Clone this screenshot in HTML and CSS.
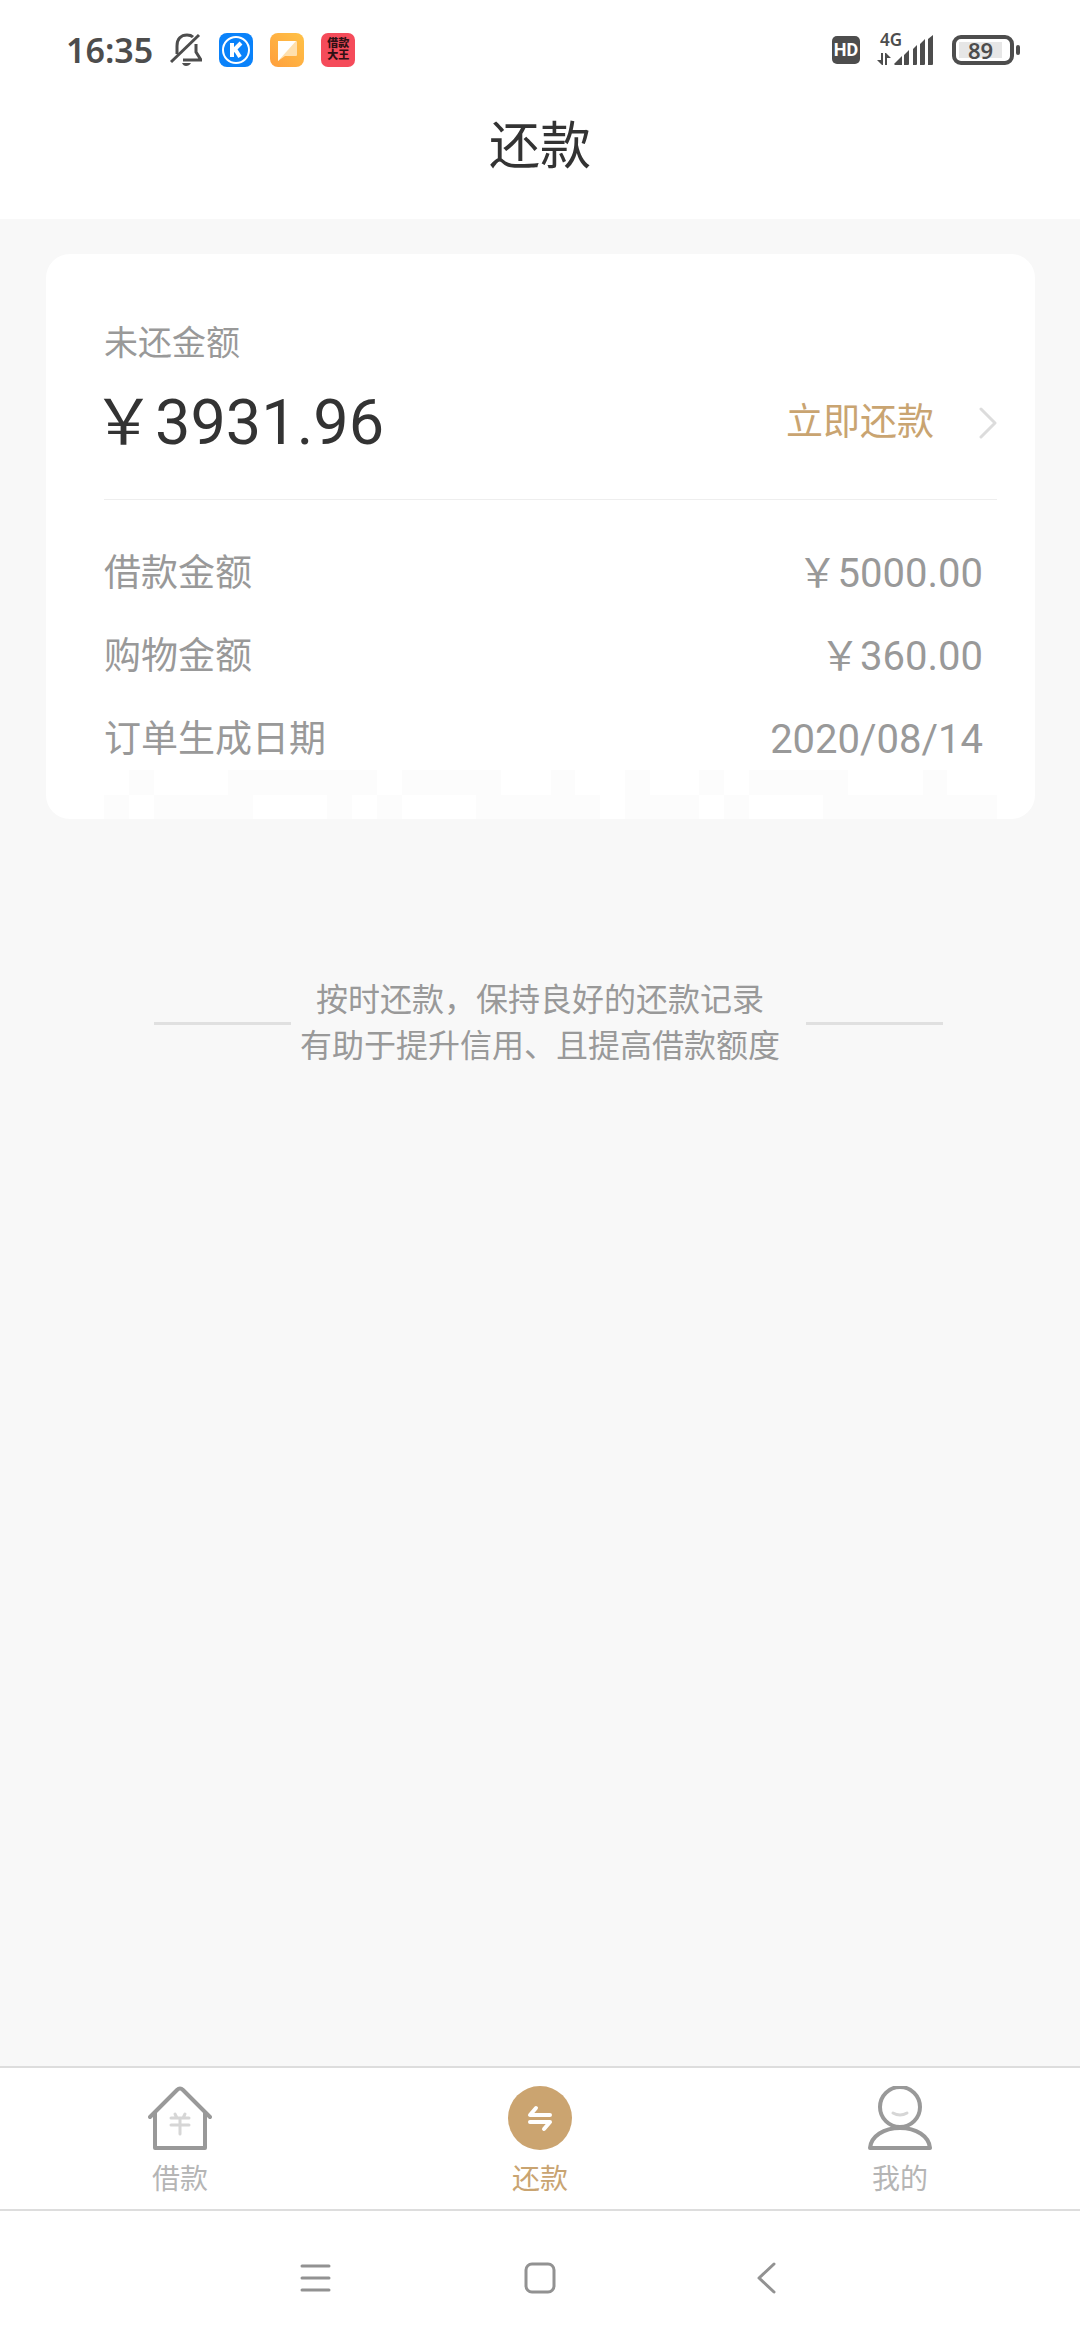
FILE: index.html
```html
<!DOCTYPE html>
<html lang="zh-CN">
<head>
    <meta charset="UTF-8">
    <meta name="viewport" content="width=device-width, initial-scale=1.0">
    <title>还款</title>
    <link rel="stylesheet" href="styles.css">
</head>
<body>
    <div class="status-bar">
        <div class="status-left">
            <span class="clock">16:35</span>
            <svg class="bell" viewBox="0 0 32 34" fill="none" stroke="#4d4d4d" stroke-width="3">
                <path d="M7 21V13C7 6 11 2 17 2C20 2 22 3 23 4M26 11V19L31 27H13"/>
                <path d="M1 29L29 2"/>
                <path d="M12 30H21C20 32 18 33 16 33S13 32 12 30Z" fill="#4d4d4d" stroke="none"/>
            </svg>
            <svg class="app-icon" viewBox="0 0 34 34">
                <rect width="34" height="34" rx="8" fill="#0a82fa"/>
                <circle cx="17" cy="17" r="13" fill="none" stroke="#fff" stroke-width="2"/>
                <path d="M13 10V24M22 10L14 18M16 16L21 24" fill="none" stroke="#fff" stroke-width="4"/>
            </svg>
            <svg class="app-icon" viewBox="0 0 34 34">
                <defs>
                    <linearGradient id="orange" x1="1" y1="0" x2="0" y2="1">
                        <stop offset="0" stop-color="#ffc247"/>
                        <stop offset="1" stop-color="#ff9f3d"/>
                    </linearGradient>
                </defs>
                <rect width="34" height="34" rx="8" fill="url(#orange)"/>
                <path d="M8 8H26Q27 8 27 9V22Q27 23 26 23H15L8 28Z" fill="#ffe0ae"/>
                <path d="M8 8H26L8 28Z" fill="#fff"/>
            </svg>
            <span class="app-badge">借款<br>大王</span>
        </div>
        <div class="status-right">
            <span class="hd">HD</span>
            <div class="signal">
                <span class="network">4G</span>
                <svg viewBox="0 0 58 32" fill="#4d4d4d">
                    <path d="M0 26L5 31H6V19H4V26ZM8 31H10V24H14L9 19H8Z"/>
                    <path d="M17 30L25 22V31H18ZM27 21L32 16V30Q32 31 31 31H27ZM36 15L40 11V30Q40 31 39 31H36ZM43 10L48 5V30Q48 31 47 31H43ZM51 5L56 1V30Q56 31 55 31H51Z"/>
                </svg>
            </div>
            <span class="battery"><span class="battery-level">89</span></span>
        </div>
    </div>

    <header class="header">
        <h1>还款</h1>
    </header>

    <main class="content">
        <section class="card">
            <h2 class="card-label">未还金额</h2>
            <div class="amount-row">
                <span class="amount">￥3931.96</span>
                <a href="#repay" class="repay-link">
                    立即还款
                    <svg viewBox="0 0 18 32" fill="none" stroke="#dcdcdc" stroke-width="3" stroke-linecap="round" stroke-linejoin="round">
                        <path d="M2 2L16 16L2 30"/>
                    </svg>
                </a>
            </div>
            <dl class="details">
                <div class="detail-row">
                    <dt>借款金额</dt>
                    <dd>￥5000.00</dd>
                </div>
                <div class="detail-row">
                    <dt>购物金额</dt>
                    <dd>￥360.00</dd>
                </div>
                <div class="detail-row">
                    <dt>订单生成日期</dt>
                    <dd>2020/08/14</dd>
                </div>
            </dl>
            <svg class="mosaic" viewBox="0 0 36 2" preserveAspectRatio="none" fill="#fcfcfc" shape-rendering="crispEdges">
                <path d="M1 0h1v1h-1zM5 0h6v1h-6zM12 0h4v1h-4zM18 0h1v1h-1zM21 0h1v1h-1zM24 0h1v1h-1zM26 0h4v1h-4zM33 0h1v1h-1z"/>
                <path d="M0 1h1v1h-1zM2 1h4v1h-4zM9 1h1v1h-1zM11 1h1v1h-1zM15 1h5v1h-5zM21 1h3v1h-3zM25 1h1v1h-1zM29 1h7v1h-7z"/>
            </svg>
        </section>

        <div class="note">
            <p>按时还款，保持良好的还款记录<br>有助于提升信用、且提高借款额度</p>
        </div>
    </main>

    <nav class="tab-bar">
        <a href="#loan" class="tab">
            <svg viewBox="0 0 64 64" fill="none" stroke="#999" stroke-width="4" stroke-linecap="round" stroke-linejoin="round">
                <path d="M2 31L29 4Q32 1 35 4L62 31"/>
                <path d="M7 27V62H57V27"/>
                <path d="M23 32H41M23 39H41M32 32V48M27 28L29 32M37 28L35 32" stroke="#d6d6d6" stroke-width="3"/>
            </svg>
            借款
        </a>
        <a href="#repay" class="tab active">
            <svg viewBox="0 0 64 64" fill="none" stroke="#fff" stroke-width="4" stroke-linecap="round" stroke-linejoin="round">
                <circle cx="32" cy="32" r="32" fill="#cba470" stroke="none"/>
                <path d="M28 22L22 29H42M22 36H42L36 43"/>
            </svg>
            还款
        </a>
        <a href="#mine" class="tab">
            <svg viewBox="0 0 64 64" fill="none" stroke="#999" stroke-width="4" stroke-linecap="round" stroke-linejoin="round">
                <circle cx="32" cy="21" r="20"/>
                <path d="M2 62C3 50 16 42 32 42S61 50 62 62Z"/>
                <path d="M25 27Q32 31 39 27" stroke="#d6d6d6" stroke-width="3"/>
            </svg>
            我的
        </a>
    </nav>

    <div class="system-nav">
        <button type="button" aria-label="菜单">
            <svg viewBox="0 0 32 32" fill="none" stroke="#929292" stroke-width="3" stroke-linecap="round">
                <path d="M3 4H30M3 16H30M3 28H30"/>
            </svg>
        </button>
        <button type="button" aria-label="主页">
            <svg viewBox="0 0 32 32" fill="none" stroke="#929292" stroke-width="3">
                <rect x="2" y="2" width="28" height="28" rx="6"/>
            </svg>
        </button>
        <button type="button" aria-label="返回">
            <svg viewBox="0 0 32 32" fill="none" stroke="#929292" stroke-width="3" stroke-linecap="round" stroke-linejoin="round">
                <path d="M25 2L10 16L25 30"/>
            </svg>
        </button>
    </div>
</body>
</html>
```

FILE: styles.css
```css
* {
    box-sizing: border-box;
}

body {
    display: flex;
    flex-direction: column;
    min-height: 100vh;
    margin: 0;
    background: #fff;
    color: #333;
    font-family: Roboto, "Noto Sans CJK SC", sans-serif;
}

h1, h2, p, dl, dd {
    margin: 0;
    font-weight: 400;
}

a {
    text-decoration: none;
}

svg {
    display: block;
}

/* status bar */
.status-bar {
    display: flex;
    justify-content: space-between;
    align-items: center;
    height: 100px;
    padding: 0 66px;
    color: #4d4d4d;
}

.status-left, .status-right {
    display: flex;
    align-items: center;
    gap: 17px;
}

.clock {
    font-family: "Noto Sans", sans-serif;
    font-size: 34px;
    font-weight: 600;
    line-height: 34px;
}

.bell {
    width: 32px;
    height: 34px;
}

.app-icon {
    width: 34px;
    height: 34px;
}

.app-badge {
    width: 34px;
    height: 34px;
    padding-top: 5px;
    border-radius: 7px;
    background: #f54b5a;
    color: #301014;
    font-size: 11px;
    font-weight: 900;
    line-height: 12px;
    text-align: center;
}

.hd {
    width: 28px;
    border-radius: 5px;
    background: #4d4d4d;
    color: #fff;
    font-size: 18px;
    font-weight: 700;
    line-height: 28px;
    text-align: center;
}

.signal {
    position: relative;
}

.signal svg {
    width: 58px;
    height: 32px;
}

.network {
    position: absolute;
    top: -2px;
    left: 3px;
    font-family: "Noto Sans", sans-serif;
    font-size: 17px;
    font-weight: 600;
    line-height: 16px;
}

.battery {
    position: relative;
    width: 62px;
    padding: 3px;
    border: 4px solid #4d4d4d;
    border-radius: 9px;
}

.battery::after {
    content: "";
    position: absolute;
    top: 6px;
    right: -10px;
    width: 4px;
    height: 10px;
    border-radius: 2px;
    background: #4d4d4d;
}

.battery-level {
    display: block;
    width: 43px;
    background: #e6e6e6;
    font-family: "Noto Sans", sans-serif;
    font-size: 22px;
    font-weight: 600;
    line-height: 16px;
    text-align: center;
}

.header {
    padding: 4px 0 29px;
    text-align: center;
}

.header h1 {
    font-size: 51px;
    line-height: 86px;
}

.content {
    flex: 1;
    padding: 35px 45px 0 46px;
    background: #f8f8f8;
}

.card {
    position: relative;
    padding: 65px 38px 38px 58px;
    border-radius: 24px;
    background: #fff;
    color: #999;
}

.card-label {
    font-size: 34px;
    line-height: 48px;
}

.amount-row {
    display: flex;
    justify-content: space-between;
    align-items: center;
    height: 133px;
    padding-bottom: 20px;
    border-bottom: 1px solid #eee;
}

/* pulls the full-width yen sign level with the labels */
.amount {
    margin-left: -12px;
    color: #333;
    font-size: 63px;
    line-height: 80px;
}

.repay-link {
    display: flex;
    align-items: center;
    gap: 45px;
    color: #c9a471;
    font-size: 37px;
    line-height: 48px;
}

.repay-link svg {
    width: 18px;
    height: 32px;
}

.details {
    padding: 32px 14px 0 0;
}

.detail-row {
    display: flex;
    justify-content: space-between;
    font-size: 37px;
    line-height: 83px;
}

.detail-row dd {
    font-size: 40px;
}

.mosaic {
    position: absolute;
    right: 38px;
    bottom: 0;
    left: 58px;
    width: calc(100% - 96px);
    height: 49px;
}

.note {
    display: flex;
    align-items: center;
    padding: 158px 92px 0 108px;
    color: #999;
    font-size: 32px;
    line-height: 46px;
    text-align: center;
}

.note::before, .note::after {
    content: "";
    flex: 1;
    height: 3px;
    background: #e0e0e0;
}

.note p {
    margin: 0 26px 0 9px;
}

.tab-bar {
    display: grid;
    grid-template-columns: repeat(3, 1fr);
    border-top: 2px solid #ddd;
    border-bottom: 2px solid #ddd;
}

.tab {
    display: flex;
    flex-direction: column;
    align-items: center;
    gap: 10px;
    padding: 18px 0 9px;
    color: #b5b5b5;
    font-size: 28px;
    line-height: 40px;
}

.tab svg {
    width: 64px;
    height: 64px;
}

.tab.active {
    color: #c9a471;
}

.system-nav {
    display: flex;
    justify-content: center;
    gap: 193px;
    padding: 51px 0 46px;
}

.system-nav button {
    padding: 0;
    border: none;
    background: none;
}

.system-nav svg {
    width: 32px;
    height: 32px;
}
```
